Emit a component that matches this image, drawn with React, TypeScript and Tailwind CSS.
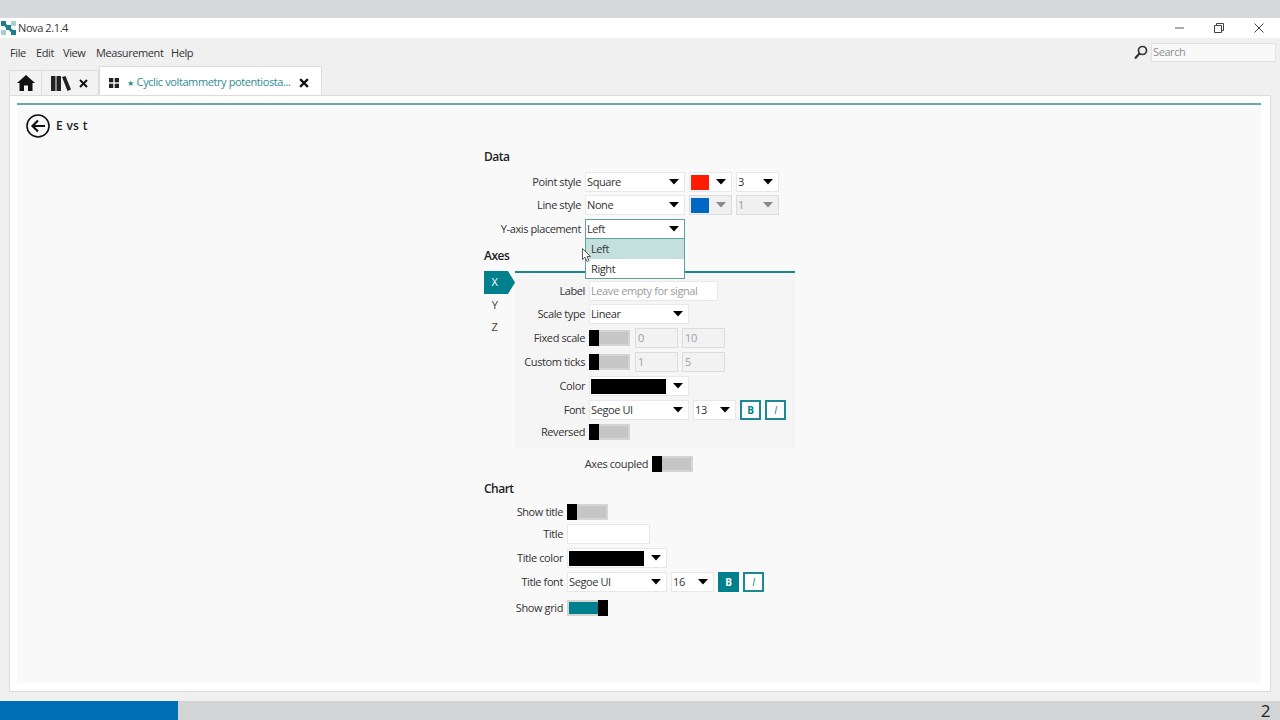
import React from "react";

const Caret = ({ muted = false }: { muted?: boolean }) => (
  <svg width="10" height="6" viewBox="0 0 10 6" className="shrink-0">
    <path d="M0 0H10L5 5.5Z" fill={muted ? "#8a8a8a" : "#000"} />
  </svg>
);

function Select({
  w,
  text,
  swatch,
  swatchW,
  disabled,
  focused,
  h = "h-[20px]",
}: {
  w: string;
  text?: string;
  swatch?: string;
  swatchW?: string;
  disabled?: boolean;
  focused?: boolean;
  h?: string;
}) {
  return (
    <div
      className={`${w} ${h} shrink-0 flex items-center justify-between pl-[1px] pr-[5px] border ${
        focused
          ? "border-[#5f9f9f] bg-white"
          : disabled
            ? "border-[#dcdcdc] bg-[#f0f0f0]"
            : "border-[#e8e8e8] bg-white"
      }`}
    >
      {swatch ? (
        <span className={`${swatchW} h-[15px] block`} style={{ background: swatch }} />
      ) : (
        <span className={disabled ? "text-[#9a9a9a]" : "text-[#333]"}>{text}</span>
      )}
      <Caret muted={disabled} />
    </div>
  );
}

const Toggle = ({ on }: { on?: boolean }) => (
  <div
    className={`w-[41px] h-[16px] shrink-0 flex border-2 border-[#d4d4d4] ${on ? "bg-[#00808c] justify-end" : "bg-[#c6c6c6] justify-start"}`}
  >
    <span className={`w-[10px] h-[16px] -my-[2px] block bg-black ${on ? "-mr-[2px]" : "-ml-[2px]"}`} />
  </div>
);

const Dim = ({ t }: { t: string }) => (
  <div className="w-[43px] h-[20px] shrink-0 border border-[#dcdcdc] bg-[#f2f2f2] pl-[2px] flex items-center text-[#a0a0a0]">
    {t}
  </div>
);

const Format = ({ t, on }: { t: string; on?: boolean }) => (
  <div
    className={`w-[21px] h-[20px] shrink-0 flex items-center justify-center border-2 border-[#1f8791] text-[10px] ${
      on ? "bg-[#00808c] text-white font-bold border-[#00808c]" : "bg-white text-[#00808c]"
    } ${t === "I" ? "italic" : "font-bold"}`}
  >
    {t}
  </div>
);

function Row({
  label,
  lw,
  mt,
  children,
}: {
  label: string;
  lw: string;
  mt: string;
  children: React.ReactNode;
}) {
  return (
    <div className={`flex items-center gap-[4px] ${mt}`}>
      <div className={`${lw} h-[16px] leading-[16px] shrink-0 text-right text-[#333] whitespace-nowrap`}>{label}</div>
      {children}
    </div>
  );
}

const Heading = ({ t, mt }: { t: string; mt: string }) => (
  <div className={`h-[18px] leading-[18px] pt-[1px] text-[12px] font-semibold tracking-[-0.5px] text-[#222] ${mt}`}>{t}</div>
);

export default function App() {
  return (
    <div
      className="w-[1280px] h-[720px] overflow-hidden flex flex-col bg-[#f0f0f0] text-[11px] tracking-[-0.4px] text-[#333]"
      style={{ fontFamily: '"Open Sans", "Noto Sans", sans-serif' }}
    >
      <div className="h-[18px] bg-[#d7d8da] shrink-0" />
      {/* title bar */}
      <div className="h-[20px] bg-white shrink-0 flex items-center">
        <svg width="15" height="14" viewBox="0 0 15 14" className="ml-[1px]">
          <rect x="0" y="0" width="5" height="5" fill="#1d7f86" />
          <rect x="10" y="0" width="5" height="5" fill="#a9cfcf" />
          <rect x="5" y="4" width="5" height="5" fill="#1d7f86" />
          <rect x="0" y="9" width="5" height="5" fill="#a9cfcf" />
          <rect x="10" y="9" width="5" height="5" fill="#1d7f86" />
          <path d="M2 2L13 12" stroke="#1d7f86" strokeWidth="3" />
        </svg>
        <span className="ml-[2px] mt-[1px] text-[#333]">Nova 2.1.4</span>
        <div className="ml-auto flex items-center text-[#444]">
          <svg width="10" height="10" viewBox="0 0 10 10" className="mr-[29px]">
            <path d="M0 5H9" stroke="#555" strokeWidth="1" />
          </svg>
          <svg width="10" height="10" viewBox="0 0 10 10" className="mr-[30px]">
            <path d="M.5 2.5H7.5V9.5H.5ZM2.5 2.5V.5H9.5V7.5H7.5" fill="none" stroke="#444" strokeWidth="1" />
          </svg>
          <svg width="10" height="10" viewBox="0 0 10 10" className="mr-[16px]">
            <path d="M.5 .5L9.5 9.5M9.5 .5L.5 9.5" stroke="#444" strokeWidth="1" />
          </svg>
        </div>
      </div>
      {/* menu */}
      <div className="h-[28px] shrink-0 flex items-center relative pl-[10px] text-[#333]">
        <span className="w-[26px] mt-[2px]">File</span>
        <span className="w-[27px] mt-[2px]">Edit</span>
        <span className="w-[33px] mt-[2px]">View</span>
        <span className="w-[75px] mt-[2px]">Measurement</span>
        <span className="mt-[2px]">Help</span>
        <div className="ml-auto flex items-center gap-[3px] pr-[4px]">
          <svg width="14" height="15" viewBox="0 0 14 15">
            <circle cx="8.5" cy="5.5" r="4" fill="none" stroke="#333" strokeWidth="1.7" />
            <path d="M5.5 8.5L1 13.5" stroke="#333" strokeWidth="2.2" />
          </svg>
          <div className="w-[125px] h-[19px] bg-[#f8f8f8] border border-[#e2e2e2] flex items-center pl-[1px] text-[#909090]">
            Search
          </div>
        </div>
      </div>
      {/* tabs */}
      <div className="h-[29px] shrink-0 flex items-end pl-[9px] relative z-10">
        <div className="w-[33px] h-[25px] flex items-center justify-center border border-b-0 border-[#dcdcdc] bg-[#f2f2f2]">
          <svg width="18" height="16" viewBox="0 0 18 16">
            <path d="M9 0L18 8H15.5V16H11V10.5H7V16H2.5V8H0Z" fill="#111" />
          </svg>
        </div>
        <div className="w-[57px] h-[25px] flex items-center pl-[9px] gap-[8px] border-t border-r border-[#dcdcdc] bg-[#f2f2f2]">
          <svg width="20" height="15" viewBox="0 0 20 15">
            <rect x="0" y="0" width="4.5" height="15" fill="#222" />
            <rect x="5.5" y="0" width="4.5" height="15" fill="#222" />
            <path d="M11 1L14.5 0L20 13.5L16.5 15Z" fill="#222" />
          </svg>
          <svg width="9" height="9" viewBox="0 0 9 9">
            <path d="M1 1L8 8M8 1L1 8" stroke="#111" strokeWidth="2" />
          </svg>
        </div>
        <div className="w-[223px] h-[29px] flex items-center pl-[9px] pt-[3px] bg-white border border-b-0 border-[#dcdcdc]">
          <svg width="10" height="10" viewBox="0 0 10 10" className="shrink-0">
            <rect x="0" y="0" width="4.3" height="4.3" fill="#222" />
            <rect x="5.7" y="0" width="4.3" height="4.3" fill="#222" />
            <rect x="0" y="5.7" width="4.3" height="4.3" fill="#222" />
            <rect x="5.7" y="5.7" width="4.3" height="4.3" fill="#222" />
          </svg>
          <span className="ml-[8px] text-[8px] text-[#2f8c92]">★</span>
          <span className="ml-[3px] text-[#2f8c92] whitespace-nowrap">Cyclic voltammetry potentiosta...</span>
          <svg width="10" height="10" viewBox="0 0 9 9" className="ml-auto mr-[12px] shrink-0">
            <path d="M1 1L8 8M8 1L1 8" stroke="#111" strokeWidth="2" />
          </svg>
        </div>
      </div>
      {/* main panel */}
      <div className="h-[597px] shrink-0 mx-[9px] bg-white border border-[#dcdcdc] pt-[7px] px-[7px] pb-[8px] flex">
        <div className="w-[1244px] bg-[#f9f9f9] border-t-2 border-[#6aa9a6] relative">
          <div className="mt-[9px] ml-[9px] h-[24px] flex items-center gap-[6px]">
            <svg width="24" height="24" viewBox="0 0 24 24">
              <circle cx="12" cy="12" r="11" fill="none" stroke="#111" strokeWidth="1.6" />
              <path d="M19 12H7M12 6.5L6.5 12L12 17.5" fill="none" stroke="#111" strokeWidth="2.2" />
            </svg>
            <span className="text-[12px] font-semibold text-[#222] tracking-[0.3px]">E vs t</span>
          </div>

          <div className="ml-[467px]">
            <Heading t="Data" mt="mt-[9px]" />
            <Row label="Point style" lw="w-[97px]" mt="mt-[7px]">
              <Select w="w-[100px]" text="Square" />
              <Select w="w-[43px]" swatch="#ff1a00" swatchW="w-[18px]" />
              <Select w="w-[43px]" text="3" />
            </Row>
            <Row label="Line style" lw="w-[97px]" mt="mt-[3px]">
              <Select w="w-[100px]" text="None" />
              <Select w="w-[43px]" swatch="#0066c4" swatchW="w-[18px]" disabled />
              <Select w="w-[43px]" text="1" disabled />
            </Row>
            <div className="relative z-20">
              <Row label="Y-axis placement" lw="w-[97px]" mt="mt-[4px]">
                <Select w="w-[100px]" text="Left" focused />
              </Row>
              <div className="absolute left-[101px] top-[20px] w-[100px] h-[40px] bg-white border border-t-0 border-[#5f9f9f] text-[#333]">
                <div className="h-[20px] bg-[#c3e0de] pl-[5px] flex items-center">Left</div>
                <div className="h-[19px] pl-[5px] pt-[1px] flex items-center">Right</div>
              </div>
              <svg width="10" height="15" viewBox="0 0 10 15" className="absolute left-[98px] top-[29px]">
                <path d="M.5 .5V11.5L3 9.2L5 13.5L7 12.5L5 8.5H8.5Z" fill="#fff" stroke="#333" strokeWidth="0.8" />
              </svg>
            </div>

            <Heading t="Axes" mt="mt-[7px]" />
            <div className="mt-[7px] flex items-start">
              <div className="w-[31px] shrink-0">
                <div
                  className="h-[23px] bg-[#00808c] text-white flex items-center pl-[6px]"
                  style={{ clipPath: "polygon(0 0, 24px 0, 31px 50%, 24px 100%, 0 100%)" }}
                >
                  <span className="w-[9px] text-center">X</span>
                </div>
                <div className="h-[22px] pl-[6px] flex items-center text-[#444]">
                  <span className="w-[9px] text-center">Y</span>
                </div>
                <div className="h-[22px] pl-[6px] flex items-center text-[#444]">
                  <span className="w-[9px] text-center">Z</span>
                </div>
              </div>
              <div className="w-[280px] h-[177px] bg-[#f5f5f5] border-t-2 border-[#1b8590]">
                <Row label="Label" lw="w-[70px]" mt="mt-[8px]">
                  <div className="w-[129px] h-[20px] bg-white border border-[#e8e8e8] flex items-center pl-[1px] text-[#9a9a9a]">
                    Leave empty for signal
                  </div>
                </Row>
                <Row label="Scale type" lw="w-[70px]" mt="mt-[3px]">
                  <Select w="w-[100px]" text="Linear" />
                </Row>
                <Row label="Fixed scale" lw="w-[70px]" mt="mt-[4px]">
                  <Toggle />
                  <div className="flex gap-[4px] ml-[1px]">
                    <Dim t="0" />
                    <Dim t="10" />
                  </div>
                </Row>
                <Row label="Custom ticks" lw="w-[70px]" mt="mt-[4px]">
                  <Toggle />
                  <div className="flex gap-[4px] ml-[1px]">
                    <Dim t="1" />
                    <Dim t="5" />
                  </div>
                </Row>
                <Row label="Color" lw="w-[70px]" mt="mt-[4px]">
                  <Select w="w-[100px]" swatch="#000" swatchW="w-[75px]" />
                </Row>
                <Row label="Font" lw="w-[70px]" mt="mt-[4px]">
                  <Select w="w-[100px]" text="Segoe UI" />
                  <Select w="w-[43px]" text="13" />
                  <div className="flex gap-[4px]">
                    <Format t="B" />
                    <Format t="I" />
                  </div>
                </Row>
                <Row label="Reversed" lw="w-[70px]" mt="mt-[4px]">
                  <Toggle />
                </Row>
              </div>
            </div>

            <Row label="Axes coupled" lw="w-[164px]" mt="mt-[8px]">
              <Toggle />
            </Row>

            <Heading t="Chart" mt="mt-[7px]" />
            <Row label="Show title" lw="w-[79px]" mt="mt-[7px]">
              <Toggle />
            </Row>
            <Row label="Title" lw="w-[79px]" mt="mt-[4px]">
              <div className="w-[83px] h-[20px] bg-white border border-[#e8e8e8]" />
            </Row>
            <Row label="Title color" lw="w-[79px]" mt="mt-[4px]">
              <Select w="w-[100px]" swatch="#000" swatchW="w-[75px]" />
            </Row>
            <Row label="Title font" lw="w-[79px]" mt="mt-[4px]">
              <Select w="w-[100px]" text="Segoe UI" />
              <Select w="w-[43px]" text="16" />
              <div className="flex gap-[4px]">
                <Format t="B" on />
                <Format t="I" />
              </div>
            </Row>
            <Row label="Show grid" lw="w-[79px]" mt="mt-[8px]">
              <Toggle on />
            </Row>
          </div>
        </div>
      </div>
      {/* status bar */}
      <div className="h-[9px] shrink-0" />
      <div className="h-[19px] shrink-0 flex items-center bg-[#d3d4d6] relative">
        <div className="w-[178px] h-[19px] bg-[#006eb5]" />
        <span className="ml-auto mr-[10px] text-[17px] leading-[17px] text-[#222]">2</span>
      </div>
    </div>
  );
}
